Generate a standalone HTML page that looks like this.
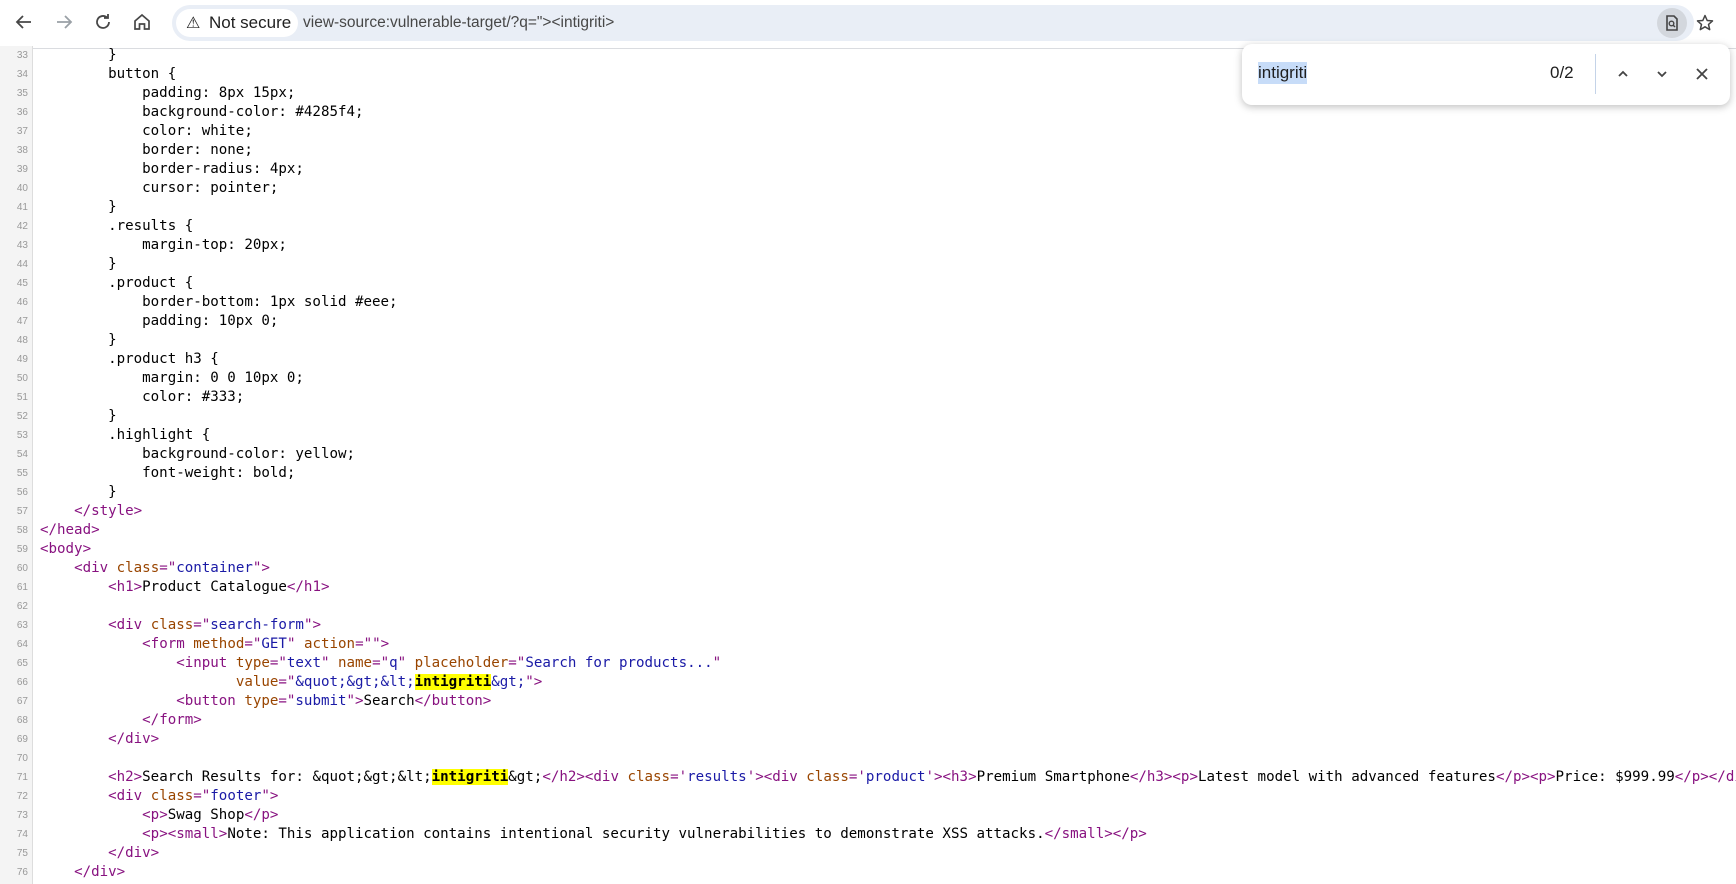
<!DOCTYPE html>
<html><head><meta charset="utf-8"><style>
html,body{margin:0;padding:0;width:1736px;height:884px;overflow:hidden;background:#fff;font-family:"Liberation Sans",sans-serif}
#bar{position:absolute;left:0;top:0;width:1736px;height:48px;background:#fff;border-bottom:1px solid #dadce0}
.ic{position:absolute;top:10px;width:24px;height:24px}
#omni{position:absolute;left:172px;top:5px;width:1522px;height:36px;border-radius:18px;background:#e9eef6}
#chip{position:absolute;left:4px;top:4px;height:28px;width:122px;border-radius:14px;background:#fff;font-size:17px;color:#1f1f1f;line-height:28px}
#url{position:absolute;left:131px;top:0;line-height:36px;font-size:15.5px;color:#474747}
#code{position:absolute;left:0;top:46px;width:1736px;height:838px;overflow:hidden}
#gut{position:absolute;left:0;top:0;width:32px;height:838px;background:#f4f4f4;border-right:1px solid #ddd}
.l{position:relative;height:19px;line-height:19px;white-space:pre;font-family:"DejaVu Sans Mono","Liberation Mono",monospace;font-size:14.15px;color:#000}
.n{position:absolute;left:0;width:28px;text-align:right;font-size:10px;color:#999;font-family:"Liberation Sans",sans-serif}
.c{position:absolute;left:40px;top:0}
.t{color:#881280}.a{color:#994500}.v{color:#1a1aa6}
.h{background:#ffff00;font-weight:bold}
#find{position:absolute;left:1242px;top:44px;width:488px;height:61px;background:#fff;border-radius:10px;box-shadow:0 2px 8px rgba(0,0,0,.25)}
</style></head><body>
<div id="bar">
<svg class="ic" style="left:12px" viewBox="0 0 24 24"><path d="M19 12H6M11 6l-6 6 6 6" fill="none" stroke="#474747" stroke-width="1.8"/></svg>
<svg class="ic" style="left:52px" viewBox="0 0 24 24"><path d="M5 12h13M13 6l6 6-6 6" fill="none" stroke="#9aa0a6" stroke-width="1.8"/></svg>
<svg class="ic" style="left:91px" viewBox="0 0 24 24"><path d="M18 12a6 6 0 1 1-2-4.5M17 4v4h-4" fill="none" stroke="#474747" stroke-width="1.8"/></svg>
<svg class="ic" style="left:130px" viewBox="0 0 24 24"><path d="M5 11l7-6 7 6v8h-4.5v-5h-5v5H5z" fill="none" stroke="#474747" stroke-width="1.7"/></svg>
<div id="omni">
<div id="chip"><span style="position:absolute;left:10px;top:1px;font-size:16px">⚠</span><span style="position:absolute;left:33px">Not secure</span></div>
<div id="url">view-source:vulnerable-target/?q="&gt;&lt;intigriti&gt;</div>
<div style="position:absolute;left:1485px;top:3px;width:30px;height:30px;border-radius:15px;background:#d3d7dd"></div>
<svg style="position:absolute;left:1490px;top:8px" width="20" height="20" viewBox="0 0 20 20"><path d="M5 3h7l3 3v11H5z" fill="none" stroke="#444" stroke-width="1.6"/><circle cx="9.5" cy="10.5" r="2.3" fill="none" stroke="#444" stroke-width="1.4"/><path d="M11 12l2 2" stroke="#444" stroke-width="1.5"/></svg>
<svg style="position:absolute;left:1523px;top:8px" width="20" height="20" viewBox="0 0 20 20"><path d="M10 2.5l2.2 5 5.3.4-4 3.5 1.2 5.2L10 13.8 5.3 16.6l1.2-5.2-4-3.5 5.3-.4z" fill="none" stroke="#444" stroke-width="1.5" stroke-linejoin="round"/></svg>
</div>
</div>
<div id="code"><div id="gut"></div>
<div class="l"><span class="n">33</span><span class="c">        }</span></div>
<div class="l"><span class="n">34</span><span class="c">        button {</span></div>
<div class="l"><span class="n">35</span><span class="c">            padding: 8px 15px;</span></div>
<div class="l"><span class="n">36</span><span class="c">            background-color: #4285f4;</span></div>
<div class="l"><span class="n">37</span><span class="c">            color: white;</span></div>
<div class="l"><span class="n">38</span><span class="c">            border: none;</span></div>
<div class="l"><span class="n">39</span><span class="c">            border-radius: 4px;</span></div>
<div class="l"><span class="n">40</span><span class="c">            cursor: pointer;</span></div>
<div class="l"><span class="n">41</span><span class="c">        }</span></div>
<div class="l"><span class="n">42</span><span class="c">        .results {</span></div>
<div class="l"><span class="n">43</span><span class="c">            margin-top: 20px;</span></div>
<div class="l"><span class="n">44</span><span class="c">        }</span></div>
<div class="l"><span class="n">45</span><span class="c">        .product {</span></div>
<div class="l"><span class="n">46</span><span class="c">            border-bottom: 1px solid #eee;</span></div>
<div class="l"><span class="n">47</span><span class="c">            padding: 10px 0;</span></div>
<div class="l"><span class="n">48</span><span class="c">        }</span></div>
<div class="l"><span class="n">49</span><span class="c">        .product h3 {</span></div>
<div class="l"><span class="n">50</span><span class="c">            margin: 0 0 10px 0;</span></div>
<div class="l"><span class="n">51</span><span class="c">            color: #333;</span></div>
<div class="l"><span class="n">52</span><span class="c">        }</span></div>
<div class="l"><span class="n">53</span><span class="c">        .highlight {</span></div>
<div class="l"><span class="n">54</span><span class="c">            background-color: yellow;</span></div>
<div class="l"><span class="n">55</span><span class="c">            font-weight: bold;</span></div>
<div class="l"><span class="n">56</span><span class="c">        }</span></div>
<div class="l"><span class="n">57</span><span class="c">    <span class="t">&lt;/style&gt;</span></span></div>
<div class="l"><span class="n">58</span><span class="c"><span class="t">&lt;/head&gt;</span></span></div>
<div class="l"><span class="n">59</span><span class="c"><span class="t">&lt;body&gt;</span></span></div>
<div class="l"><span class="n">60</span><span class="c">    <span class="t">&lt;div <span class="a">class</span>="<span class="v">container</span>"&gt;</span></span></div>
<div class="l"><span class="n">61</span><span class="c">        <span class="t">&lt;h1&gt;</span>Product Catalogue<span class="t">&lt;/h1&gt;</span></span></div>
<div class="l"><span class="n">62</span><span class="c"></span></div>
<div class="l"><span class="n">63</span><span class="c">        <span class="t">&lt;div <span class="a">class</span>="<span class="v">search-form</span>"&gt;</span></span></div>
<div class="l"><span class="n">64</span><span class="c">            <span class="t">&lt;form <span class="a">method</span>="<span class="v">GET</span>" <span class="a">action</span>=""&gt;</span></span></div>
<div class="l"><span class="n">65</span><span class="c">                <span class="t">&lt;input <span class="a">type</span>="<span class="v">text</span>" <span class="a">name</span>="<span class="v">q</span>" <span class="a">placeholder</span>="<span class="v">Search for products...</span>"</span></span></div>
<div class="l"><span class="n">66</span><span class="c">                       <span class="t"><span class="a">value</span>="<span class="v">&amp;quot;&amp;gt;&amp;lt;<span class="h" style="color:#000">intigriti</span>&amp;gt;</span>"&gt;</span></span></div>
<div class="l"><span class="n">67</span><span class="c">                <span class="t">&lt;button <span class="a">type</span>="<span class="v">submit</span>"&gt;</span>Search<span class="t">&lt;/button&gt;</span></span></div>
<div class="l"><span class="n">68</span><span class="c">            <span class="t">&lt;/form&gt;</span></span></div>
<div class="l"><span class="n">69</span><span class="c">        <span class="t">&lt;/div&gt;</span></span></div>
<div class="l"><span class="n">70</span><span class="c"></span></div>
<div class="l"><span class="n">71</span><span class="c">        <span class="t">&lt;h2&gt;</span>Search Results for: &amp;quot;&amp;gt;&amp;lt;<span class="h">intigriti</span>&amp;gt;<span class="t">&lt;/h2&gt;</span><span class="t">&lt;div <span class="a">class</span>='<span class="v">results</span>'&gt;</span><span class="t">&lt;div <span class="a">class</span>='<span class="v">product</span>'&gt;</span><span class="t">&lt;h3&gt;</span>Premium Smartphone<span class="t">&lt;/h3&gt;</span><span class="t">&lt;p&gt;</span>Latest model with advanced features<span class="t">&lt;/p&gt;</span><span class="t">&lt;p&gt;</span>Price: $999.99<span class="t">&lt;/p&gt;</span><span class="t">&lt;/div&gt;</span></span></div>
<div class="l"><span class="n">72</span><span class="c">        <span class="t">&lt;div <span class="a">class</span>="<span class="v">footer</span>"&gt;</span></span></div>
<div class="l"><span class="n">73</span><span class="c">            <span class="t">&lt;p&gt;</span>Swag Shop<span class="t">&lt;/p&gt;</span></span></div>
<div class="l"><span class="n">74</span><span class="c">            <span class="t">&lt;p&gt;</span><span class="t">&lt;small&gt;</span>Note: This application contains intentional security vulnerabilities to demonstrate XSS attacks.<span class="t">&lt;/small&gt;</span><span class="t">&lt;/p&gt;</span></span></div>
<div class="l"><span class="n">75</span><span class="c">        <span class="t">&lt;/div&gt;</span></span></div>
<div class="l"><span class="n">76</span><span class="c">    <span class="t">&lt;/div&gt;</span></span></div>
</div>
<div id="find">
<span style="position:absolute;left:16px;top:18px;font-size:17px;line-height:22px;color:#1f1f1f;background:#c7dcf8">intigriti</span>
<span style="position:absolute;left:308px;top:18px;font-size:17px;line-height:22px;color:#1f1f1f">0/2</span>
<div style="position:absolute;left:353px;top:10px;width:1px;height:40px;background:#c4d3e8"></div>
<svg style="position:absolute;left:372px;top:21px" width="18" height="18" viewBox="0 0 18 18"><path d="M5 11l4-4 4 4" fill="none" stroke="#444" stroke-width="1.8"/></svg>
<svg style="position:absolute;left:411px;top:21px" width="18" height="18" viewBox="0 0 18 18"><path d="M5 7l4 4 4-4" fill="none" stroke="#444" stroke-width="1.8"/></svg>
<svg style="position:absolute;left:451px;top:21px" width="18" height="18" viewBox="0 0 18 18"><path d="M4 4l10 10M14 4L4 14" fill="none" stroke="#444" stroke-width="1.8"/></svg>
</div>
</body></html>
